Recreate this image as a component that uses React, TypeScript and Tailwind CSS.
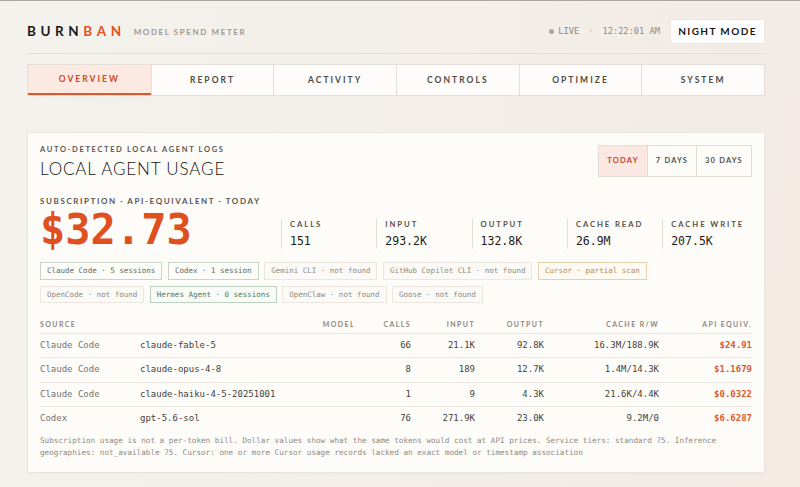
import React from "react";

const sans = "font-['Lato','Open_Sans',sans-serif]";
const mono = "font-['DejaVu_Sans_Mono','Liberation_Mono',monospace]";

const tabs = ["OVERVIEW", "REPORT", "ACTIVITY", "CONTROLS", "OPTIMIZE", "SYSTEM"];

const stats = [
  { label: "CALLS", value: "151" },
  { label: "INPUT", value: "293.2K" },
  { label: "OUTPUT", value: "132.8K" },
  { label: "CACHE READ", value: "26.9M" },
  { label: "CACHE WRITE", value: "207.5K" },
];

type ChipKind = "found" | "green" | "none" | "partial";
const chipRows: { text: string; kind: ChipKind }[][] = [
  [
    { text: "Claude Code · 5 sessions", kind: "found" },
    { text: "Codex · 1 session", kind: "found" },
    { text: "Gemini CLI · not found", kind: "none" },
    { text: "GitHub Copilot CLI · not found", kind: "none" },
    { text: "Cursor · partial scan", kind: "partial" },
  ],
  [
    { text: "OpenCode · not found", kind: "none" },
    { text: "Hermes Agent · 0 sessions", kind: "green" },
    { text: "OpenClaw · not found", kind: "none" },
    { text: "Goose · not found", kind: "none" },
  ],
];

const chipClass: Record<ChipKind, string> = {
  found: "border-[#c9d5cb] text-[#5d6a61] bg-[#fcfcf8]",
  green: "border-[#bcd1c1] text-[#4e7a5c] bg-[#f9fbf6]",
  none: "border-[#ebe7e0] text-[#8f8a84] bg-[#fbfaf6]",
  partial: "border-[#e7d1ad] text-[#b88a4e] bg-[#fdfaf3]",
};

const rows = [
  ["Claude Code", "claude-fable-5", "66", "21.1K", "92.8K", "16.3M/188.9K", "$24.91"],
  ["Claude Code", "claude-opus-4-8", "8", "189", "12.7K", "1.4M/14.3K", "$1.1679"],
  ["Claude Code", "claude-haiku-4-5-20251001", "1", "9", "4.3K", "21.6K/4.4K", "$0.0322"],
  ["Codex", "gpt-5.6-sol", "76", "271.9K", "23.0K", "9.2M/0", "$6.6287"],
];

const cols = "grid grid-cols-[100px_215px_56px_64px_69px_115px_93px]";

export default function App() {
  return (
    <div
      className={`min-h-[487px] w-full border-t border-[#aca79f] bg-[linear-gradient(100deg,#f4f2ed_0%,#f3efea_45%,#f3eae4_100%)] ${sans}`}
    >
      <div className="ml-[27px] w-[738px]">
        {/* Header */}
        <div className="flex items-center justify-between border-b border-[#e2ddd6] pt-[18px] pb-[9px]">
          <div className="flex items-center">
            <span className="text-[13.5px] font-bold tracking-[0.34em] leading-none text-[#1c1a18]">
              BURN<span className="text-[#e4521f]">BAN</span>
            </span>
            <span className="ml-[8px] text-[8px] font-bold tracking-[0.2em] text-[#9d988f] leading-none">
              MODEL SPEND METER
            </span>
          </div>
          <div className="flex items-center">
            <span className="w-[5px] h-[5px] rounded-full bg-[#aaa69f]" />
            <span className={`${mono} ml-[4px] text-[8.7px] text-[#8e8a84]`}>LIVE</span>
            <span className={`${mono} ml-[9px] text-[8.7px] text-[#a8a39c]`}>·</span>
            <span className={`${mono} ml-[9px] text-[8.7px] text-[#8e8a84]`}>12:22:01 AM</span>
            <button className="ml-[10px] h-[25px] w-[95px] border border-[#ebe7e0] bg-white text-[10px] font-bold tracking-[0.14em] text-[#191715]">
              NIGHT MODE
            </button>
          </div>
        </div>

        {/* Tabs */}
        <div className="mt-[10px] grid grid-cols-6 border border-[#e4e0d9] bg-[#fdfcfa]">
          {tabs.map((t, i) => (
            <div
              key={t}
              className={`h-[30px] flex items-center justify-center text-[8.5px] font-bold tracking-[0.24em] ${
                i > 0 ? "border-l border-[#e4e0d9]" : ""
              } ${
                i === 0
                  ? "bg-[#fbe9e2] text-[#cb4925] border-b-2 border-b-[#e0562a]"
                  : "text-[#4f4b46]"
              }`}
            >
              {t}
            </div>
          ))}
        </div>

        {/* Card */}
        <div className="mt-[36px] border border-[#e9e5dd] bg-[#fdfcf9] px-[12px] pt-[12px] pb-[14px] shadow-[0_1px_2px_rgba(0,0,0,0.03)]">
          <div className="flex items-start justify-between">
            <div>
              <div className="text-[7.5px] font-bold tracking-[0.22em] leading-[10px] text-[#5b5752]">
                AUTO-DETECTED LOCAL AGENT LOGS
              </div>
              <div className="mt-[3.5px] text-[17px] font-light tracking-[0.05em] leading-[20px] text-[#141210]">
                LOCAL AGENT USAGE
              </div>
            </div>
            <div className="flex border border-[#e2ddd5] h-[32px]">
              <div className="w-[48px] flex items-center justify-center bg-[#fbe8e2] text-[#c9432a] text-[7.5px] font-bold tracking-[0.16em]">
                TODAY
              </div>
              <div className="w-[49px] border-l border-[#e2ddd5] flex items-center justify-center text-[#56524d] text-[7.5px] font-bold tracking-[0.16em]">
                7 DAYS
              </div>
              <div className="w-[55px] border-l border-[#e2ddd5] flex items-center justify-center text-[#56524d] text-[7.5px] font-bold tracking-[0.16em]">
                30 DAYS
              </div>
            </div>
          </div>

          <div className="mt-[17.5px] text-[8px] font-bold tracking-[0.2em] leading-[10px] text-[#5a5651]">
            SUBSCRIPTION · API-EQUIVALENT · TODAY
          </div>

          <div className="flex items-start">
            <div
              className={`${mono} w-[241px] shrink-0 mt-[6px] text-[42px] font-bold leading-[36px] text-[#e0501f]`}
            >
              $32.73
            </div>
            <div className="flex flex-1 mt-[13px]">
              {stats.map((s, i) => (
                <div
                  key={s.label}
                  className={`${i < 4 ? "w-[95.3px]" : "flex-1"} h-[30px] border-l border-[#e3dfd8] pl-[8px]`}
                >
                  <div className="text-[7.7px] font-bold tracking-[0.25em] leading-[10px] text-[#56524d] whitespace-nowrap">
                    {s.label}
                  </div>
                  <div className={`${mono} mt-[4.5px] text-[11.5px] leading-[14px] text-[#1e1b18]`}>
                    {s.value}
                  </div>
                </div>
              ))}
            </div>
          </div>

          {/* Chips */}
          <div className="mt-[13px] flex flex-col gap-[6px]">
            {chipRows.map((row, ri) => (
              <div key={ri} className="flex gap-[5.5px]">
                {row.map((c) => (
                  <span
                    key={c.text}
                    className={`${mono} border px-[6px] text-[7.5px] leading-[15.6px] whitespace-nowrap ${chipClass[c.kind]}`}
                  >
                    {c.text}
                  </span>
                ))}
              </div>
            ))}
          </div>

          {/* Table */}
          <div className="mt-[13px]">
            <div className={`${cols} h-[18px] items-center border-b border-[#e9e5de] text-[7px] font-bold tracking-[0.2em] text-[#8d8881]`}>
              <div>SOURCE</div>
              <div className="text-right">MODEL</div>
              <div className="text-right">CALLS</div>
              <div className="text-right">INPUT</div>
              <div className="text-right">OUTPUT</div>
              <div className="text-right">CACHE R/W</div>
              <div className="text-right">API EQUIV.</div>
            </div>
            {rows.map((r, i) => (
              <div
                key={i}
                className={`${cols} ${mono} h-[24.3px] items-center text-[9px] ${
                  i < rows.length - 1 ? "border-b border-[#ece8e1]" : ""
                }`}
              >
                <div className="text-[#77726c]">{r[0]}</div>
                <div className="text-[#45413d]">{r[1]}</div>
                <div className="text-right text-[#45413d]">{r[2]}</div>
                <div className="text-right text-[#45413d]">{r[3]}</div>
                <div className="text-right text-[#45413d]">{r[4]}</div>
                <div className="text-right text-[#45413d]">{r[5]}</div>
                <div className="text-right font-bold text-[#db5a2c]">{r[6]}</div>
              </div>
            ))}
          </div>

          <p className={`${mono} mt-[4px] text-[7.65px] leading-[11.3px] text-[#8f8a84]`}>
            Subscription usage is not a per-token bill. Dollar values show what the same tokens would cost at
            API prices. Service tiers: standard 75. Inference geographies: not_available 75. Cursor: one or
            more Cursor usage records lacked an exact model or timestamp association
          </p>
        </div>
      </div>
    </div>
  );
}
